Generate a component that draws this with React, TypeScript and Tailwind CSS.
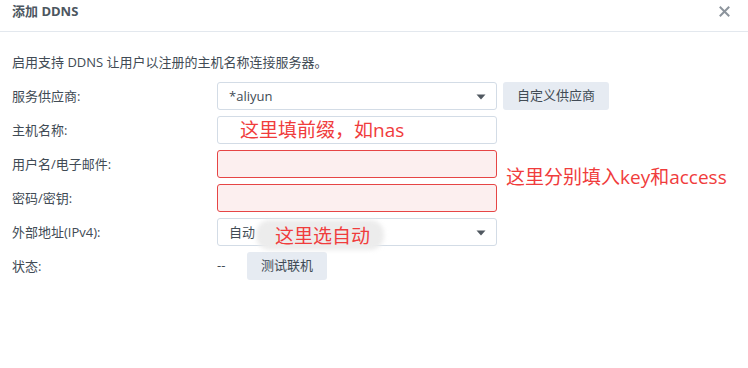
import React from "react";

const font = { fontFamily: '"Open Sans", "Noto Sans CJK SC", sans-serif' };

function Caret() {
  return (
    <svg width="10" height="6" viewBox="0 0 10 6" className="absolute right-[10px] top-[11px]">
      <path d="M0.5 0.5 L9.5 0.5 L5 5.5 Z" fill="#505860" />
    </svg>
  );
}

function Label({ children }: { children: React.ReactNode }) {
  return <div className="w-[205px] shrink-0 text-[13px] text-[#414b55] leading-[28px]">{children}</div>;
}

export default function App() {
  return (
    <div className="w-[748px] h-[368px] bg-white relative overflow-hidden" style={font}>
      <div className="h-[32px] border-b border-[#e3e8ee] flex items-center justify-between pl-[12px] pr-[18px]">
        <div className="text-[13px] font-bold text-[#4c5660] leading-none -mt-[8px]">添加 DDNS</div>
        <svg width="11" height="11" viewBox="0 0 11 11" className="-mt-[8px]">
          <path d="M1.5 1.5 L9.5 9.5 M9.5 1.5 L1.5 9.5" stroke="#8c949c" strokeWidth="2" strokeLinecap="square" />
        </svg>
      </div>
      <div className="px-[12px]">
        <div className="mt-[21px] text-[13px] text-[#414b55] leading-[18px]">启用支持 DDNS 让用户以注册的主机名称连接服务器。</div>
        <div className="mt-[11px] flex flex-col gap-[6px]">
          <div className="flex items-center h-[28px]">
            <Label>服务供应商:</Label>
            <div className="relative w-[280px] h-[28px] border border-[#d3dce6] rounded-[3px] bg-white pl-[11px] text-[13px] text-[#414b55] leading-[26px]">
              *aliyun
              <Caret />
            </div>
            <div className="ml-[6px] w-[106px] h-[28px] rounded-[3px] bg-[#e6ebf2] text-[13px] text-[#414b55] flex items-center justify-center">自定义供应商</div>
          </div>
          <div className="flex items-center h-[28px]">
            <Label>主机名称:</Label>
            <div className="w-[280px] h-[28px] border border-[#d3dce6] rounded-[3px] bg-white pl-[22px] text-[19px] text-[#f03c3c] leading-[26px]">这里填前缀，如nas</div>
          </div>
          <div className="flex items-center h-[28px]">
            <Label>用户名/电子邮件:</Label>
            <div className="w-[280px] h-[28px] border border-[#e64545] rounded-[3px] bg-[#fcefef]" />
          </div>
          <div className="flex items-center h-[28px]">
            <Label>密码/密钥:</Label>
            <div className="w-[280px] h-[28px] border border-[#e64545] rounded-[3px] bg-[#fcefef]" />
          </div>
          <div className="flex items-center h-[28px]">
            <Label>外部地址(IPv4):</Label>
            <div className="relative w-[280px] h-[28px] border border-[#d3dce6] rounded-[3px] bg-white pl-[11px] text-[13px] text-[#414b55] leading-[26px]">
              自动
              <Caret />
              <div className="absolute left-[38px] top-[1px] w-[128px] h-[30px] rounded-[14px] bg-[#ececec] blur-[2px]" />
              <div className="absolute left-[57px] top-[4px] text-[19px] leading-[26px] text-[#f03c3c]">这里选自动</div>
            </div>
          </div>
          <div className="flex items-center h-[28px]">
            <Label>状态:</Label>
            <div className="text-[13px] text-[#414b55] w-[30px]">--</div>
            <div className="w-[80px] h-[28px] rounded-[3px] bg-[#e6ebf2] text-[13px] text-[#414b55] flex items-center justify-center">测试联机</div>
          </div>
        </div>
      </div>
      <div className="absolute left-[506px] top-[164px] text-[19px] leading-[26px] text-[#f03c3c]">这里分别填入key和access</div>
    </div>
  );
}
